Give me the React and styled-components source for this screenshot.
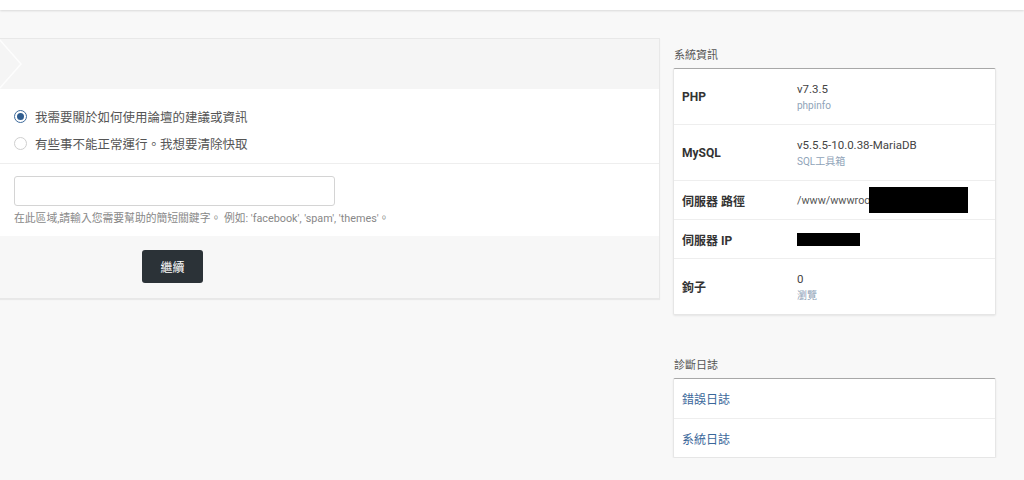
import styled, { createGlobalStyle } from "styled-components";

const GlobalStyle = createGlobalStyle`
  html, body {
    margin: 0;
    padding: 0;
    background: #f8f8f8;
    font-family: Roboto, "Noto Sans CJK TC", sans-serif;
    color: #333;
    overflow: hidden;
  }
  * { box-sizing: border-box; }
`;

const TopBar = styled.div`
  height: 10px;
  background: #fff;
  box-shadow: 0 1px 2px rgba(0,0,0,0.12);
`;

const Main = styled.div`
  display: flex;
  align-items: flex-start;
  gap: 13px;
  padding-top: 28px;
`;

const LeftCard = styled.div`
  margin-left: -20px;
  width: 680px;
  flex-shrink: 0;
  background: #fff;
  border: 1px solid #e8e8e8;
  box-shadow: 0 1px 1px rgba(0,0,0,0.06);
`;

const CardHead = styled.div`
  height: 50px;
  background: #f5f5f5;
  display: flex;
  align-items: stretch;
`;

const Crumb = styled.div`
  width: 42px;
  display: flex;
  justify-content: flex-end;
`;

const Body = styled.div`
  padding: 14px 0 0 33px;
`;

const RadioRow = styled.label`
  display: flex;
  align-items: center;
  gap: 8px;
  height: 27px;
  font-size: 12.5px;
  color: #555;
`;

const Radio = styled.span`
  width: 13px;
  height: 13px;
  border-radius: 50%;
  border: 1px solid ${(p) => (p.$on ? "#3d6a9b" : "#cfcfcf")};
  display: flex;
  align-items: center;
  justify-content: center;
  &::after {
    content: "";
    width: 7px;
    height: 7px;
    border-radius: 50%;
    background: ${(p) => (p.$on ? "#2f5d8f" : "transparent")};
  }
`;

const Divider = styled.div`
  height: 1px;
  background: #eee;
  margin: 6px 0 0 -33px;
`;

const Field = styled.div`
  padding: 12px 0 11px 0;
`;

const Input = styled.input`
  display: block;
  width: 321px;
  height: 30px;
  border: 1px solid #d4d4d4;
  border-radius: 3px;
  background: #fff;
  outline: none;
`;

const Help = styled.div`
  margin-top: 3px;
  font-size: 10.8px;
  color: #888;
`;

const Footer = styled.div`
  height: 62px;
  background: #f7f7f7;
  padding: 14px 0 0 161px;
`;

const Button = styled.button`
  width: 61px;
  height: 33px;
  background: #2b3237;
  color: #fff;
  border: none;
  border-radius: 3px;
  font-family: inherit;
  font-size: 12px;
`;

const Side = styled.div`
  width: 323px;
  display: flex;
  flex-direction: column;
`;

const SideTitle = styled.div`
  font-size: 11px;
  color: #555;
  padding-left: 1px;
  margin-top: ${(p) => p.$top || 0}px;
  margin-bottom: 6px;
`;

const InfoCard = styled.div`
  background: #fff;
  border: 1px solid #e6e6e6;
  border-top: 1px solid #a8a8a8;
  border-radius: 2px;
  box-shadow: 0 1px 2px rgba(0,0,0,0.08);
`;

const Row = styled.div`
  box-sizing: content-box;
  display: flex;
  align-items: center;
  min-height: ${(p) => p.$h || 38}px;
  padding: 0 8px;
  & + & { border-top: 1px solid #eee; }
`;

const Key = styled.div`
  width: 115px;
  font-size: 12px;
  font-weight: 700;
  color: #333;
`;

const Val = styled.div`
  display: flex;
  flex-direction: column;
  font-size: 11.5px;
  color: #444;
  line-height: 17px;
`;

const Sub = styled.span`
  font-size: 10px;
  color: #8fa3b8;
  line-height: 15px;
`;

const Path = styled.span`
  font-size: 10.8px;
  color: #555;
  display: flex;
  align-items: center;
`;

const Redact = styled.span`
  display: inline-block;
  background: #000;
  width: ${(p) => p.$w}px;
  height: ${(p) => p.$h}px;
  margin-left: ${(p) => p.$ml || 0}px;
`;

const LogLink = styled.a`
  font-size: 12px;
  color: #3a679a;
  text-decoration: none;
`;

export default function App() {
  return (
    <>
      <GlobalStyle />
      <TopBar />
      <Main>
        <LeftCard>
          <CardHead>
            <Crumb>
              <svg width="24" height="50" viewBox="0 0 24 50">
                <polyline points="0,0 22,25 0,50" fill="none" stroke="#fdfdfd" strokeWidth="1.5" />
              </svg>
            </Crumb>
          </CardHead>
          <Body>
            <RadioRow>
              <Radio $on />
              我需要關於如何使用論壇的建議或資訊
            </RadioRow>
            <RadioRow>
              <Radio />
              有些事不能正常運行。我想要清除快取
            </RadioRow>
            <Divider />
            <Field>
              <Input type="text" />
              <Help>在此區域,請輸入您需要幫助的簡短關鍵字。 例如: 'facebook', 'spam', 'themes'。</Help>
            </Field>
          </Body>
          <Footer>
            <Button>繼續</Button>
          </Footer>
        </LeftCard>
        <Side>
          <SideTitle $top={8}>系統資訊</SideTitle>
          <InfoCard>
            <Row $h={55}>
              <Key>PHP</Key>
              <Val>v7.3.5<Sub>phpinfo</Sub></Val>
            </Row>
            <Row $h={55}>
              <Key>MySQL</Key>
              <Val>v5.5.5-10.0.38-MariaDB<Sub>SQL工具箱</Sub></Val>
            </Row>
            <Row>
              <Key>伺服器 路徑</Key>
              <Path>/www/wwwroot<Redact $w={99} $h={26} $ml={-5} /></Path>
            </Row>
            <Row>
              <Key>伺服器 IP</Key>
              <Path><Redact $w={63} $h={13} /></Path>
            </Row>
            <Row $h={55}>
              <Key>鉤子</Key>
              <Val>0<Sub>瀏覽</Sub></Val>
            </Row>
          </InfoCard>
          <SideTitle $top={41}>診斷日誌</SideTitle>
          <InfoCard>
            <Row $h={39}><LogLink href="#">錯誤日誌</LogLink></Row>
            <Row $h={38}><LogLink href="#">系統日誌</LogLink></Row>
          </InfoCard>
        </Side>
      </Main>
    </>
  );
}
